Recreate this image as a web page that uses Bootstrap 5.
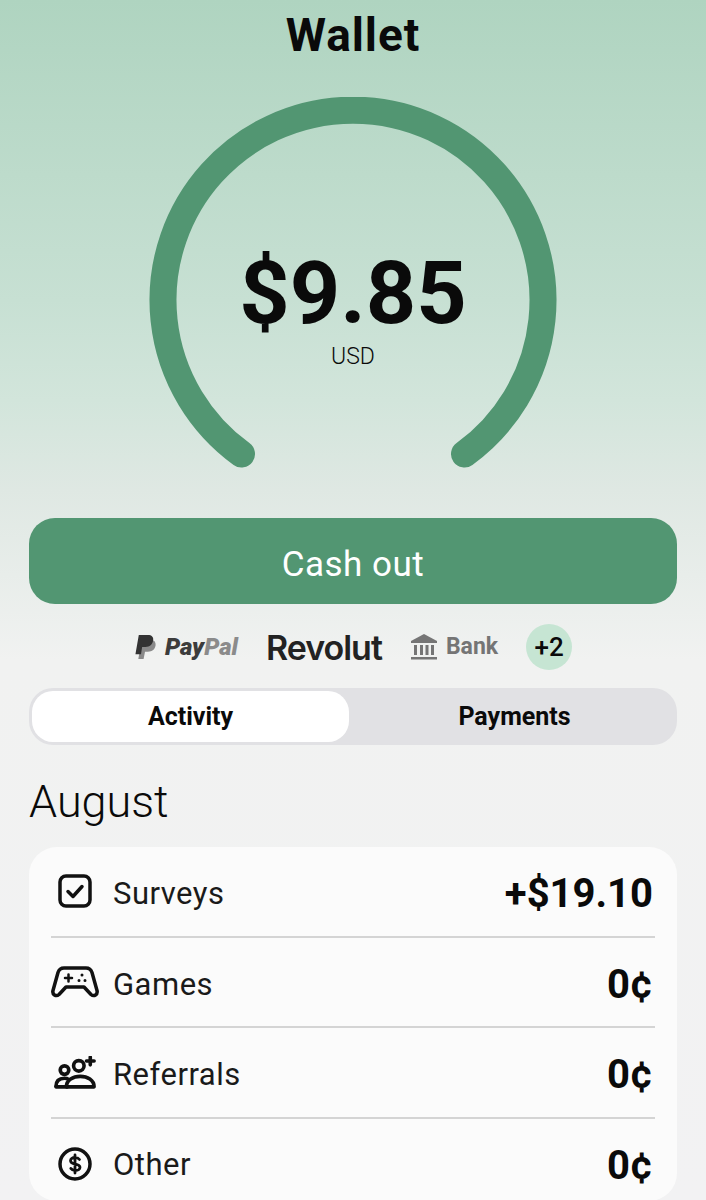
<!DOCTYPE html>
<html lang="en">
<head>
  <meta charset="UTF-8">
  <meta name="viewport" content="width=device-width, initial-scale=1.0">
  <title>Wallet</title>
  <link href="https://cdn.jsdelivr.net/npm/bootstrap@5.3.0/dist/css/bootstrap.min.css" rel="stylesheet">
  <style>
    html, body {
      height: 1200px;
      overflow: hidden;
    }
    body {
      background: linear-gradient(180deg, #afd4c0 0, #c7e0d3 300px, #d2e5db 400px, #dfe8e3 490px, #f1f2f1 660px, #f2f2f3 100%);
      font-family: Roboto, "Open Sans", sans-serif;
      color: #0a0a0a;
    }
    .wallet-title {
      font-size: 46px;
      line-height: 48px;
      font-weight: 700;
      padding-top: 11px;
      letter-spacing: .9px;
    }
    .gauge-box {
      height: 400px;
      margin-top: 38px;
    }
    .gauge-box svg {
      width: 706px;
      height: 400px;
    }
    .gauge-label {
      top: 151px;
      left: 0;
      right: 0;
    }
    .gauge-amount {
      font-size: 88px;
      line-height: 90px;
      font-weight: 700;
    }
    .gauge-unit {
      font-size: 23px;
      line-height: 25px;
      margin-top: 6px;
      font-weight: 300;
    }
    .page-side {
      padding: 0 29px;
    }
    .cash-btn {
      height: 86px;
      margin-top: 21px;
      padding-top: 14px;
      border-radius: 26px;
      border: 0;
      background: #529672;
      color: #fff;
      font-size: 35px;
      letter-spacing: .5px;
    }
    .pay-row {
      height: 84px;
      padding-top: 2px;
      gap: 28px;
    }
    .pay-paypal {
      font-size: 24px;
      font-weight: 900;
      font-style: italic;
      color: #3c3c3c;
    }
    .pay-paypal span {
      color: #8b8b8b;
    }
    .pay-revolut {
      font-family: Inter, sans-serif;
      font-size: 34px;
      font-weight: 600;
      letter-spacing: -1px;
      color: #222;
    }
    .pay-bank {
      font-size: 23px;
      font-weight: 700;
      color: #757575;
    }
    .pay-more {
      width: 46px;
      height: 46px;
      background: #c6e5d3;
      font-size: 26px;
      font-weight: 500;
    }
    .tab-track {
      height: 57px;
      background: #e1e1e4;
      border-radius: 24px;
      padding: 3px;
    }
    .tab-item {
      flex: 1;
      padding-left: 6px;
      font-size: 25px;
      font-weight: 700;
      border-radius: 21px;
    }
    .tab-on {
      flex: 0 0 317px;
      padding-left: 0;
      background: #fff;
    }
    .month-name {
      font-size: 45px;
      line-height: 50px;
      font-weight: 300;
      margin: 32px 0 20px;
    }
    .stat-card {
      background: #fbfbfb;
      border-radius: 28px;
      padding: 0 22px;
    }
    .stat-row {
      height: 90.5px;
      border-bottom: 2px solid #d4d4d4;
    }
    .stat-row:last-child {
      height: 82px;
      padding-top: 9px;
      border-bottom: 0;
    }
    .stat-row:last-child .stat-name,
    .stat-row:last-child .stat-value {
      padding-top: 3px;
    }
    .stat-icon {
      width: 48px;
      margin-right: 14px;
    }
    .stat-name {
      font-size: 31px;
      padding-top: 6px;
      letter-spacing: .5px;
      color: #1a1a1a;
    }
    .stat-value {
      font-size: 40px;
      padding-top: 6px;
      padding-right: 2px;
      font-weight: 700;
    }
  </style>
</head>
<body>
  <div class="text-center wallet-title">Wallet</div>

  <div class="position-relative gauge-box">
    <svg viewBox="0 0 706 400">
      <!-- ring: centre 353,202 r 190, gap at the bottom -->
      <path d="M 241.5 357 A 190 190 0 1 1 464.5 357" fill="none" stroke="#529672" stroke-width="27" stroke-linecap="round"/>
    </svg>
    <div class="position-absolute text-center gauge-label">
      <div class="gauge-amount">$9.85</div>
      <div class="gauge-unit">USD</div>
    </div>
  </div>

  <div class="page-side">
    <button type="button" class="btn w-100 d-block cash-btn">Cash out</button>

    <div class="d-flex align-items-center justify-content-center pay-row">
      <div class="d-flex align-items-center gap-2 pay-paypal">
        <svg width="23" height="27" viewBox="0 0 24 26">
          <path d="M8 5h9c4 0 6 2.500 5.500 6-.6 4-3.500 6.500-8 6.500h-3L10 25H4.500z" fill="#8a8a8a"/>
          <path d="M5 0h9.500c4 0 6 2 5.500 5.500-.6 4.500-3.700 7-8 7H8.500L7.300 20H1.500z" fill="#333"/>
        </svg>
        <div>Pay<span>Pal</span></div>
      </div>
      <div class="pay-revolut">Revolut</div>
      <div class="d-flex align-items-center gap-2 pay-bank">
        <svg width="28" height="26" viewBox="0 0 28 26" fill="#757575">
          <path d="M14 0 27 7v2H1V7z"/>
          <rect x="4" y="11" width="3" height="10"/>
          <rect x="10" y="11" width="3" height="10"/>
          <rect x="15.500" y="11" width="3" height="10"/>
          <rect x="21" y="11" width="3" height="10"/>
          <rect x="1" y="23" width="26" height="2.500"/>
        </svg>
        <div>Bank</div>
      </div>
      <div class="rounded-circle d-flex align-items-center justify-content-center pay-more">+2</div>
    </div>

    <div class="d-flex tab-track">
      <div class="d-flex align-items-center justify-content-center tab-item tab-on">Activity</div>
      <div class="d-flex align-items-center justify-content-center tab-item">Payments</div>
    </div>

    <div class="month-name">August</div>

    <div class="stat-card">
      <div class="d-flex align-items-center stat-row">
        <div class="d-flex justify-content-center stat-icon">
          <svg width="34" height="34" viewBox="0 0 34 34" fill="none" stroke="#111" stroke-width="3.500" stroke-linecap="round" stroke-linejoin="round">
            <rect x="2" y="2" width="30" height="30" rx="6"/>
            <path d="M10 17.500l5 5 9-10"/>
          </svg>
        </div>
        <div class="stat-name">Surveys</div>
        <div class="ms-auto stat-value">+$19.10</div>
      </div>
      <div class="d-flex align-items-center stat-row">
        <div class="d-flex justify-content-center stat-icon">
          <svg width="48" height="32" viewBox="0 0 48 32" fill="none" stroke="#111" stroke-width="3.500" stroke-linecap="round" stroke-linejoin="round">
            <path d="M13 2h22c3 0 5 1.500 6 4.500l5 18c1 4-3 6.500-6 4l-7-7.500H15l-7 7.500c-3 2.500-7 0-6-4l5-18C8 3.500 10 2 13 2z"/>
            <path d="M14 12h7M17.500 8.500v7" stroke-width="2.500"/>
            <path d="M31 9v.1M28 14.500v.1M34 14.500v.1" stroke-width="3"/>
          </svg>
        </div>
        <div class="stat-name">Games</div>
        <div class="ms-auto stat-value">0¢</div>
      </div>
      <div class="d-flex align-items-center stat-row">
        <div class="d-flex justify-content-center stat-icon">
          <svg width="42" height="33" viewBox="0 0 44 34" fill="none" stroke="#111" stroke-width="3.800" stroke-linejoin="round">
            <circle cx="11" cy="14.500" r="4.500"/>
            <circle cx="26" cy="10" r="5.500"/>
            <path d="M2 32c0-5.500 3-9 9-9 1.500 0 3 .3 4 1M13 32h29c0-7-7-11-14.500-11S13 25 13 32z"/>
            <path d="M2 32h12" stroke-linecap="round"/>
            <path d="M38 1v8M34 5h8" stroke-linecap="round"/>
          </svg>
        </div>
        <div class="stat-name">Referrals</div>
        <div class="ms-auto stat-value">0¢</div>
      </div>
      <div class="d-flex align-items-center stat-row">
        <div class="d-flex justify-content-center stat-icon">
          <svg width="34" height="34" viewBox="0 0 34 34" fill="none" stroke="#111" stroke-width="3.500" stroke-linecap="round">
            <circle cx="17" cy="17" r="15"/>
            <path d="M21.500 12.500c-1-1.300-2.500-2-4.500-2-2.500 0-4.500 1.300-4.500 3.300 0 4.700 9.500 2 9.500 6.500 0 2-2 3.300-4.500 3.300-2 0-3.700-.8-4.700-2.200M17 8v18" stroke-width="2.800"/>
          </svg>
        </div>
        <div class="stat-name">Other</div>
        <div class="ms-auto stat-value">0¢</div>
      </div>
    </div>
  </div>

  <script src="https://cdn.jsdelivr.net/npm/bootstrap@5.3.0/dist/js/bootstrap.bundle.min.js"></script>
</body>
</html>
